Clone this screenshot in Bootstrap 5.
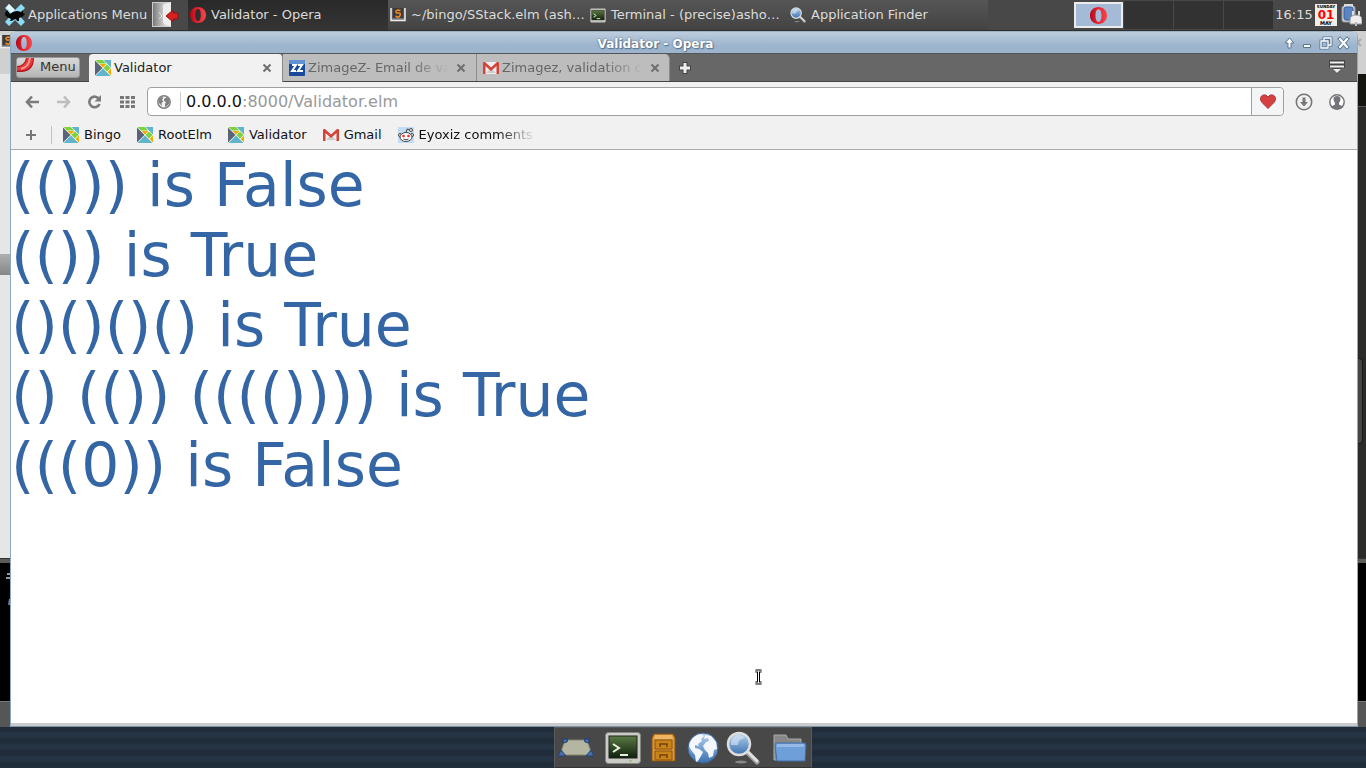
<!DOCTYPE html>
<html lang="en">
<head>
<meta charset="utf-8">
<meta name="viewport" content="width=device-width, initial-scale=1">
<title>Validator - Opera</title>
<link href="https://cdn.jsdelivr.net/npm/bootstrap@5.3.0/dist/css/bootstrap.min.css" rel="stylesheet">
<style>
body{font-family:"DejaVu Sans",sans-serif;font-size:13px;line-height:18px;color:#111;background:#243140}
button{font:inherit;color:inherit;border:0;background:none;padding:0}
svg{display:block;flex:none}
a{color:inherit;text-decoration:none}
.shrinkable{min-width:0}
/* desktop panel */
.panel{height:31px;background:#484848;border-bottom:1px solid #2e2e2e;color:#dcdcdc}
.apps{width:152px;padding-left:4px;gap:2px}
.quit{width:36px}
.task{flex:0 1 200px;min-width:0;height:30px;padding:0 0 0 2px;gap:5px;background:linear-gradient(#565656,#434343)}
.task.on{background:linear-gradient(#292929,#353535)}
.pager{gap:1px}
.pager button{width:49px;height:28px;background:#323232}
.pager .on{background:#a4bad6;border:2px solid #ececec;height:26px}
.clock{width:42px}
/* background windows */
.behind{width:10px}
.behind.end{width:8px}
.h-title{height:43px;background:#d0d0d0}
.h-tab{height:33px;background:#15150f;border-bottom:1px solid #555}
.h-rule{height:5px;background:#5c5b57;border-top:1px solid #333}
.h-term{height:138px;background:#000;color:#ccc}
.h-foot{height:26px;background:#565656;border-top:1px solid #777}
.page-l{background:#e6e6e6}
.page-r{background:#2b2c2a}
.thumb-l{height:21px;background:linear-gradient(#b0b0b0,#868686)}
.thumb-r{height:86px;width:5px;background:#454545;border:1px solid #191919;border-left:0;border-radius:0 4px 4px 0}
.desk{background:#ccc;min-height:0}
.win{background:#fff;border-left:1px solid #8fa9c2;border-right:1px solid #8fa9c2;border-radius:6px 6px 0 0;overflow:hidden}
.titlebar{height:22px;background:linear-gradient(#bccddd,#9db4ce 65%);border-top:1px solid #9eb2c6;padding:0 6px 0 5px}
.titlebar .cap{font-weight:700;font-size:12px;line-height:20px;color:#fff;text-shadow:0 0 2px #45637f,1px 1px 1px #5b7893;padding-top:2px}
.side-l{width:20px}.side-r{width:76px;gap:4px}
.strip{height:29px;background:#676767;border-bottom:1px solid #444;border-top:1px solid #555;padding-left:5px}
.menu-btn{width:64px;height:21px;margin-right:9px;border:1px solid #999;border-radius:3px;background:linear-gradient(#dadada,#b4b4b4);color:#333;gap:6px;overflow:hidden}
.tab{flex:0 1 194px;min-width:0;height:27px;background:#bdbdbd;color:#666;padding:0 10px 0 6px;border-right:1px solid #8a8a8a;gap:3px}
.tab.on{background:#f1f1f1;color:#222;height:28px;border-radius:4px 4px 0 0;margin-bottom:-1px}
.tab:last-of-type{border-radius:0 5px 0 0;flex-basis:193px;padding-right:9px}
.tab button{color:#6e6e6e}
.fade-end{overflow:hidden;white-space:nowrap;-webkit-mask-image:linear-gradient(to right,#000 calc(100% - 38px),transparent);mask-image:linear-gradient(to right,#000 calc(100% - 38px),transparent)}
.tools{background:#f1f1f1;border-bottom:1px solid #aaa;height:68px}
.bar1{height:39px;padding:0 12px 0 14px}
.navs{gap:16px;width:122px}
.url{height:29px;background:#fff;border:1px solid #a0a0a0;border-radius:4px}
.url .fav{width:32px;height:27px;border-left:1px solid #a0a0a0;background:#f4f5f7;border-radius:0 4px 4px 0}
.url .info{width:33px;height:19px;margin-right:5px;border-right:1px solid #ccc;padding-left:9px}
.addr{font-size:16px;line-height:22px;color:#999;outline:0}
.addr b{font-weight:400;color:#111}
.more-btn{margin-left:11px}
.bar2{height:28px;padding-left:14px}
.bm{gap:5px;margin-right:16px}
.sep{width:1px;height:18px;background:#c4c4c4;margin:0 11px 0 14px}
.bm-last{width:117px}
.output{font-size:60px;line-height:70px;color:#3465a4;min-height:0}
.ibeam{left:55%;bottom:38px;margin-left:3px}
.lower{height:4px;background:#c9cbcd;border-bottom:1px solid #7d95ab}
/* dock */
.dockrow{height:41px;background:repeating-linear-gradient(#202c3a 0 4px,#263545 7px 9px,#202c3a 12px)}
.dock{background:#484848;border:1px solid #5b5b5b;border-bottom-color:#333;padding:0 1px}
.dock button{width:40px}
.dock .gapped{margin-left:7px}
</style>
</head>
<body class="vh-100 d-flex flex-column overflow-hidden">
<svg width="0" height="0" class="position-absolute" aria-hidden="true">
<defs>
<linearGradient id="red" x1="0" x2="1"><stop offset="0" stop-color="#a80a18"/><stop offset=".35" stop-color="#e31b2a"/><stop offset="1" stop-color="#f5474a"/></linearGradient>
<linearGradient id="blue" x2="0" y2="1"><stop stop-color="#b7d3ee"/><stop offset="1" stop-color="#3a70b0"/></linearGradient>
<linearGradient id="screen" x2="0" y2="1"><stop stop-color="#5b7a45"/><stop offset="1" stop-color="#10200c"/></linearGradient>
<linearGradient id="door"><stop stop-color="#777"/><stop offset="1" stop-color="#fff"/></linearGradient>
<symbol id="opera" viewBox="0 0 16 16"><path fill="url(#red)" fill-rule="evenodd" d="M8 0C3.500 0 0 3.300 0 8s3.500 8 8 8 8-3.300 8-8-3.500-8-8-8zm0 2c1.900 0 2.800 2.600 2.800 6S9.900 14 8 14 5.200 11.400 5.200 8 6.100 2 8 2z"/></symbol>
<symbol id="elm" viewBox="0 0 16 16"><path fill="#f4f8f4" d="M0 0h16v16H0z"/><path fill="#5a6378" d="M0 .5L7.500 8 0 15.500z"/><path fill="#60b5cc" d="M.5 16h15L8 8.500zM8.600 0H16v7.400z"/><path fill="#7fd13b" d="M.5 0h7.300l3.500 3.500H4zM8.400 8L12 4.400 15.600 8 12 11.600z"/><path fill="#f0ad00" d="M4.600 4.100h6.800L8 7.500zM16 8.600v6.800L12.600 12z"/></symbol>
<symbol id="gmail" viewBox="0 0 16 12"><path fill="#eee" d="M1 0h14v12H1z"/><path fill="#ccc" d="M3 11l5-5 5 5z"/><path fill="#d54338" d="M0 1Q0 0 1 0h1l6 5.500L14 0h1q1 0 1 1v11h-2.500V4L8 9 2.500 4v8H0z"/></symbol>
<symbol id="glass" viewBox="0 0 34 34"><ellipse cx="15" cy="31" rx="6" ry="1.500" fill="#888"/><path d="M21 21l10 10" stroke="#999" stroke-width="5" stroke-linecap="round"/><path d="M21 20l10 10" stroke="#e0e0e0" stroke-width="3" stroke-linecap="round"/><circle cx="13" cy="13" r="11" fill="url(#blue)" stroke="#ddd" stroke-width="2.500"/><path d="M5 14a8 8 0 0 1 14-7Q12 8 12 14z" fill="#e3eef8" opacity=".55"/></symbol>
<symbol id="term" viewBox="0 0 36 32"><rect x=".5" y=".5" width="35" height="31" rx="3" fill="#c9cbc4" stroke="#83867d"/><rect x="4" y="4" width="28" height="22" fill="url(#screen)" stroke="#222"/><path d="M8 12l6 4-6 4M15 23h8" fill="none" stroke="#e8f2dc" stroke-width="2"/><path d="M24 29h3" stroke="#7b5"/></symbol>
<symbol id="subl" viewBox="0 0 16 14"><path d="M1 0v12.500h14V0" fill="#777" stroke="#eee" stroke-width="1.500"/><path fill="#3a3a3a" d="M2.500 0h11v10h-11z"/><path d="M10.500 2.500Q6 1.500 6 3.500t2.500 1.500T10 7.500 5.500 8" fill="none" stroke="#f0861c" stroke-width="1.600"/></symbol>
<symbol id="x" viewBox="0 0 10 10"><path d="M1.500 1.500l7 7M8.500 1.500l-7 7" stroke="currentColor" stroke-width="2"/></symbol>
</defs>
</svg>

<header class="panel d-flex align-items-center flex-shrink-0">
  <button class="apps d-flex align-items-center flex-shrink-0">
    <svg width="22" height="22" viewBox="0 0 22 22"><path d="M5 0l6 6 6-6 4 4-6 7 6 7-4 4-6-6-6 6-4-4 6-7-6-7z" fill="#8bdcf5"/><path d="M5 0l6 6-3 3-6-5z" fill="#e6faff"/><path d="M1 9l2-3 3 4q5-5 11-2l2-2v3l2 1-3 3-3 1v3h-2l-1-2-3 1-1 1H6l1-2-4-2-2-2z" fill="#080808"/></svg>
    <span>Applications Menu</span>
  </button>
  <button class="quit flex-shrink-0" aria-label="Log out">
    <svg width="27" height="26" viewBox="0 0 27 26"><rect x=".5" y=".5" width="18" height="24" fill="url(#door)" stroke="#ccc"/><path d="M11 3l8-3v25l-8-4z" fill="#eee"/><path d="M7 10l3 4-3 3" fill="none" stroke="#ddd"/><path d="M14 14l7-6v3h5v6h-5v3z" fill="#d81f20" stroke="#921414"/></svg>
  </button>
  <nav class="shrinkable d-flex flex-grow-1" aria-label="Tasks">
    <button class="task on d-flex align-items-center"><svg width="16" height="16"><use href="#opera"/></svg><span class="text-nowrap">Validator - Opera</span></button>
    <button class="task d-flex align-items-center"><svg width="16" height="14"><use href="#subl"/></svg><span class="text-nowrap">~/bingo/SStack.elm (ash…</span></button>
    <button class="task d-flex align-items-center"><svg width="16" height="15"><use href="#term"/></svg><span class="text-nowrap">Terminal - (precise)asho…</span></button>
    <button class="task d-flex align-items-center"><svg width="16" height="16"><use href="#glass"/></svg><span class="text-nowrap">Application Finder</span></button>
  </nav>
  <div class="pager d-flex align-items-center flex-shrink-0">
    <button class="on d-flex align-items-center justify-content-center" aria-label="Workspace 1"><svg width="17" height="17"><use href="#opera"/></svg></button>
    <button aria-label="Workspace 2"></button><button aria-label="Workspace 3"></button><button aria-label="Workspace 4"></button>
  </div>
  <span class="clock ms-0 ps-0 flex-shrink-0 text-center">16:15</span>
  <svg width="22" height="22" viewBox="0 0 22 22" font-family="DejaVu Sans, sans-serif" font-weight="bold" text-anchor="middle"><rect width="22" height="22" fill="#efeee8"/><text x="11" y="4" font-size="4">SUNDAY</text><text x="11" y="15" font-size="12" fill="#f00">01</text><text x="11" y="21" font-size="5">MAY</text></svg>
  <svg class="ms-1 me-1" width="21" height="22" viewBox="0 0 21 22"><rect x="1" y="2" width="13" height="16" rx="2" fill="#c7d1de" stroke="#999"/><rect x="3" y="0" width="9" height="3" fill="#ddd"/><rect x="3" y="3" width="9" height="13" rx="2" fill="#5a85c5" stroke="#345f9e"/><path d="M12 7v5M18 7v5" stroke="#ddd" stroke-width="2"/><path d="M9 20v-4q0-5 6-5t6 5v4z" fill="#eee" stroke="#999"/><path d="M15 18v4" stroke="#bbb" stroke-width="2"/></svg>
</header>

<div class="desk d-flex flex-grow-1">
  <div class="behind d-flex flex-column flex-shrink-0 overflow-hidden" aria-hidden="true">
    <div class="h-title pt-1"><svg width="16" height="14"><use href="#subl"/></svg></div>
    <div class="page-l flex-grow-1 d-flex flex-column"><div style="flex:180 0 0"></div><div class="thumb-l"></div><div style="flex:283 0 0"></div></div>
    <div class="h-rule"></div>
    <div class="h-term pt-1"><svg width="10" height="40" viewBox="0 0 10 40"><path d="M7 7h3M6 11h4" stroke="#ccc" stroke-width="1.500"/><path d="M9 38l1-6" stroke="#6685c0" stroke-width="2"/></svg></div>
    <div class="h-foot"></div>
  </div>

  <main class="win shrinkable d-flex flex-column flex-grow-1">
    <div class="titlebar d-flex align-items-center flex-shrink-0">
      <div class="side-l flex-shrink-0"><svg width="16" height="16"><use href="#opera"/></svg></div>
      <div class="cap flex-grow-1 text-center">Validator - Opera</div>
      <div class="side-r d-flex flex-shrink-0 justify-content-end">
        <button aria-label="Shade"><svg width="14" height="14" viewBox="0 0 14 14"><path d="M6.500 2l4.500 5H8v5H5V7H2z" fill="#fff" stroke="#587793"/></svg></button>
        <button aria-label="Minimise"><svg width="14" height="14" viewBox="0 0 14 14"><path d="M2.500 8.500h7v3h-7z" fill="#fff" stroke="#587793"/></svg></button>
        <button aria-label="Restore"><svg width="14" height="14" viewBox="0 0 14 14"><path d="M5 5V2h7v7H9M2 5h7v7H2z" fill="none" stroke="#587793" stroke-width="3"/><path d="M5 5V2h7v7H9M2 5h7v7H2z" fill="none" stroke="#fff" stroke-width="1.300"/></svg></button>
        <button aria-label="Close"><svg width="14" height="14" viewBox="0 0 14 14"><path d="M3 3l7 8M10 3l-7 8" stroke="#587793" stroke-width="4" stroke-linecap="square"/><path d="M3 3l7 8M10 3l-7 8" stroke="#fff" stroke-width="2.200" stroke-linecap="square"/></svg></button>
      </div>
    </div>

    <div class="strip d-flex align-items-end flex-shrink-0">
      <button class="menu-btn d-flex align-items-start flex-shrink-0 align-self-center"><svg width="17" height="14" viewBox="0 0 17 14"><path d="M0 8Q7 8 9 0h8q0 13-12 14H0z" fill="#b3141f"/><path d="M0 9Q8 9 10 0h6q0 11-11 12.500H0z" fill="#e5393c"/><path d="M4 11q8-2 9-11" stroke="#ff9a8c" stroke-width="2" fill="none"/></svg><span>Menu</span></button>
      <div class="tab on d-flex align-items-center"><svg width="16" height="16"><use href="#elm"/></svg><span class="flex-grow-1">Validator</span><button aria-label="Close tab"><svg width="10" height="10"><use href="#x"/></svg></button></div>
      <div class="tab d-flex align-items-center"><svg width="16" height="16" viewBox="0 0 16 16"><rect width="16" height="16" rx="1" fill="#174a9c"/><path fill="#5e93d6" d="M0 1q0-1 1-1h14q1 0 1 1v3H0z"/><path d="M3 5h4l-4 6h4M9 5h4l-4 6h5" fill="none" stroke="#fff" stroke-width="2"/></svg><span class="fade-end flex-grow-1">ZimageZ- Email de valid</span><button class="ms-1" aria-label="Close tab"><svg width="10" height="10"><use href="#x"/></svg></button></div>
      <div class="tab d-flex align-items-center"><svg width="16" height="12"><use href="#gmail"/></svg><span class="fade-end flex-grow-1">Zimagez, validation com</span><button class="ms-1" aria-label="Close tab"><svg width="10" height="10"><use href="#x"/></svg></button></div>
      <button class="ms-2 align-self-center" aria-label="New tab"><svg width="14" height="14" viewBox="0 0 14 14"><path d="M7 1v12M1 7h12" stroke="#444" stroke-width="5"/><path d="M7 2v10M2 7h10" stroke="#eee" stroke-width="3"/></svg></button>
      <button class="ms-auto me-2 pe-1 align-self-center" aria-label="Tab menu"><svg width="16" height="15" viewBox="0 0 16 15"><path d="M0 0h16v8h-3l-5 6-5-6H0z" fill="#454545"/><path d="M1 2.500h14M1 6.500h14" stroke="#eee" stroke-width="2"/><path d="M4 9h8l-4 4z" fill="#eee"/></svg></button>
    </div>

    <div class="tools flex-shrink-0">
      <div class="bar1 d-flex align-items-center">
        <div class="navs d-flex align-items-center flex-shrink-0">
          <button aria-label="Back"><svg width="15" height="14" viewBox="0 0 15 14"><path d="M14 7H3M7 1.500L2 7l5 5.500" fill="none" stroke="#7b7b7b" stroke-width="2.600"/></svg></button>
          <button aria-label="Forward"><svg width="15" height="14" viewBox="0 0 15 14"><path d="M1 7h11M8 1.500L13 7l-5 5.500" fill="none" stroke="#bdbdbd" stroke-width="2.600"/></svg></button>
          <button aria-label="Reload"><svg width="16" height="14" viewBox="0 0 16 14"><path d="M12 4A5.300 5.300 0 1 0 12.500 9" fill="none" stroke="#7b7b7b" stroke-width="2.600"/><path d="M14 0v6.500H7.500z" fill="#7b7b7b"/></svg></button>
          <button aria-label="Speed dial"><svg width="16" height="12" viewBox="0 0 16 12"><path d="M1 1.500h15M1 6h15M1 10.500h15" stroke="#777" stroke-width="3" stroke-dasharray="4 1.500"/></svg></button>
        </div>
        <div class="url shrinkable d-flex align-items-center flex-grow-1">
          <div class="info d-flex align-items-center flex-shrink-0"><svg width="14" height="14" viewBox="0 0 14 14"><circle cx="7" cy="7" r="6.200" fill="#f4f4f4" stroke="#808080" stroke-width="1.500"/><path d="M1.500 5L4 2l2.500.5L5 5l1.500 1.500L4.500 8 5 11 2 8zM7 4l3-2 2.500 3v3L10 11l-2 1V9l1-2-2-1z" fill="#808080"/></svg></div>
          <div class="addr flex-grow-1 text-nowrap overflow-hidden" role="textbox" contenteditable="true" spellcheck="false" aria-label="Address"><b>0.0.0.0</b>:8000/Validator.elm</div>
          <button class="fav d-flex align-items-center justify-content-center flex-shrink-0" aria-label="Bookmark"><svg width="16" height="15" viewBox="0 0 16 15"><path d="M8 14.500C5 11 .5 8.500.5 4.500.5 1 5.500-.8 8 3c2.500-3.800 7.500-2 7.500 1.500 0 4-4.500 6.500-7.500 10z" fill="#d64040" stroke="#a83232"/></svg></button>
        </div>
        <button class="more-btn flex-shrink-0" aria-label="Downloads"><svg width="18" height="18" viewBox="0 0 18 18"><circle cx="9" cy="9" r="7.700" fill="none" stroke="#777" stroke-width="1.600"/><path d="M7.500 4.500h3V9H13l-4 4.500L5 9h2.500z" fill="#777"/></svg></button>
        <button class="flex-shrink-0 ms-3 me-0" aria-label="Account"><svg width="16" height="18" viewBox="1 0 16 18"><circle cx="9" cy="9" r="7.200" fill="#fff" stroke="#777" stroke-width="1.500"/><path d="M2.500 14q2-1.500 4.500-2.500V10Q5.500 8.500 5.500 6 5.500 3 9 3t3.500 3q0 2.500-1.500 4v1.500q2.500 1 4.500 2.500-2.500 2.500-6.500 2.500T2.500 14z" fill="#73757a"/></svg></button>
      </div>
      <nav class="bar2 d-flex align-items-center" aria-label="Bookmarks">
        <button aria-label="Add bookmark"><svg width="12" height="12" viewBox="0 0 12 12"><path d="M6 1v10M1 6h10" stroke="#777" stroke-width="2"/></svg></button>
        <span class="sep"></span>
        <a class="bm d-flex align-items-center" href="#"><svg width="16" height="16"><use href="#elm"/></svg>Bingo</a>
        <a class="bm d-flex align-items-center" href="#"><svg width="16" height="16"><use href="#elm"/></svg>RootElm</a>
        <a class="bm d-flex align-items-center" href="#"><svg width="16" height="16"><use href="#elm"/></svg>Validator</a>
        <a class="bm d-flex align-items-center" href="#"><svg width="16" height="12"><use href="#gmail"/></svg>Gmail</a>
        <a class="bm d-flex align-items-center" href="#"><svg width="16" height="16" viewBox="0 0 16 16"><rect width="16" height="16" fill="#c2dcf5"/><path d="M8 6l1-4 4 1" stroke="#444" fill="none"/><circle cx="13" cy="3" r="1.500" fill="#fff" stroke="#444"/><circle cx="2" cy="8" r="1.500" fill="#fff" stroke="#444"/><circle cx="14" cy="8" r="1.500" fill="#fff" stroke="#444"/><ellipse cx="8" cy="10" rx="6" ry="4.500" fill="#fff" stroke="#444"/><circle cx="5.500" cy="9" r="1.300" fill="#f22"/><circle cx="10.500" cy="9" r="1.300" fill="#f22"/><path d="M5.500 12q2.500 1.500 5 0" stroke="#444" fill="none"/></svg><span class="bm-last fade-end">Eyoxiz comments</span></a>
      </nav>
    </div>

    <section class="output flex-grow-1 position-relative text-nowrap overflow-hidden">
      <div>(())) is False</div>
      <div>(()) is True</div>
      <div>()()()() is True</div>
      <div>() (()) (((()))) is True</div>
      <div>(((0)) is False</div>
      <svg class="ibeam position-absolute" width="9" height="16" viewBox="0 0 9 16" aria-hidden="true"><path d="M1.500 2h6M1.500 14h6M4.500 2v12" fill="none" stroke="#000" stroke-width="3"/><path d="M1.500 2h6M1.500 14h6M4.500 2v12" fill="none" stroke="#fff" stroke-width="1"/></svg>
    </section>
    <div class="lower flex-shrink-0"></div>
  </main>

  <div class="behind end d-flex flex-column flex-shrink-0 overflow-hidden" aria-hidden="true">
    <div class="h-title"><svg width="8" height="22" viewBox="0 0 8 22"><path d="M-4 8l7 7M3 8l-7 7" stroke="#aaa" stroke-width="2"/></svg></div>
    <div class="h-tab"></div>
    <div class="page-r flex-grow-1 d-flex flex-column"><div style="flex:251 0 0"></div><div class="thumb-r"></div><div style="flex:114 0 0"></div></div>
    <div class="h-rule"></div>
    <div class="h-term"></div>
    <div class="h-foot"></div>
  </div>
</div>

<footer class="dockrow d-flex justify-content-center flex-shrink-0">
  <nav class="dock d-flex" aria-label="Dock">
    <button class="d-flex align-items-center justify-content-center" aria-label="Show desktop"><svg width="36" height="20" viewBox="0 0 36 20"><path d="M7 2h22l5 15H2z" fill="#b5b6a2" stroke="#85866f"/><path d="M5 1h5l-1 3-4 1zM26 1h5v4l-4-1zM3 12l5 6H0zM33 12l-5 6h8z" fill="#4b6ea6" stroke="#223f75"/></svg></button>
    <button class="gapped d-flex align-items-center justify-content-center" aria-label="Terminal"><svg width="36" height="32"><use href="#term"/></svg></button>
    <button class="d-flex align-items-center justify-content-center" aria-label="Files"><svg width="25" height="30" viewBox="0 0 25 30"><path d="M3 1h19l2 4v23H1V5z" fill="#d8973a" stroke="#8d5411"/><path d="M4 2h17l1 4H3z" fill="#edb565"/><path d="M4 7h17v9H4zM4 18h17v9H4z" fill="#c98419" stroke="#8d5411"/><path d="M9 14v-3h7v3M9 25v-3h7v3" fill="none" stroke="#70420d" stroke-width="1.500"/></svg></button>
    <button class="d-flex align-items-center justify-content-center" aria-label="Web browser"><svg width="32" height="32" viewBox="0 0 32 32"><circle cx="16" cy="16" r="15" fill="url(#blue)" stroke="#3e6594"/><path d="M3 10q4-7 11-8l3 2-3 3 1 2-4 3 1 2-4-1 0 3 4 1 4 3-2 4-3 5-2 1-1-7-4-5-2-4zM18 3l6 1 5 6 1 7-3 1-1 6-4 2-1-5-3-3-2-4 3-4 3-1-1-3-4 1z" fill="#f3f7fb"/></svg></button>
    <button class="d-flex align-items-center justify-content-center" aria-label="Search"><svg width="34" height="34"><use href="#glass"/></svg></button>
    <button class="gapped d-flex align-items-center justify-content-center" aria-label="Folder"><svg width="34" height="30" viewBox="0 0 34 30"><path d="M1 27V2h12l2 4h13v20z" fill="#888" stroke="#aaa"/><path d="M3 10h29l1 2-1 16H4L2 12z" fill="#6f9fd8" stroke="#3e6ca8"/><path d="M4 11h27v3H4z" fill="#94b9e6"/></svg></button>
  </nav>
</footer>
<script src="https://cdn.jsdelivr.net/npm/bootstrap@5.3.0/dist/js/bootstrap.bundle.min.js"></script>
</body>
</html>
